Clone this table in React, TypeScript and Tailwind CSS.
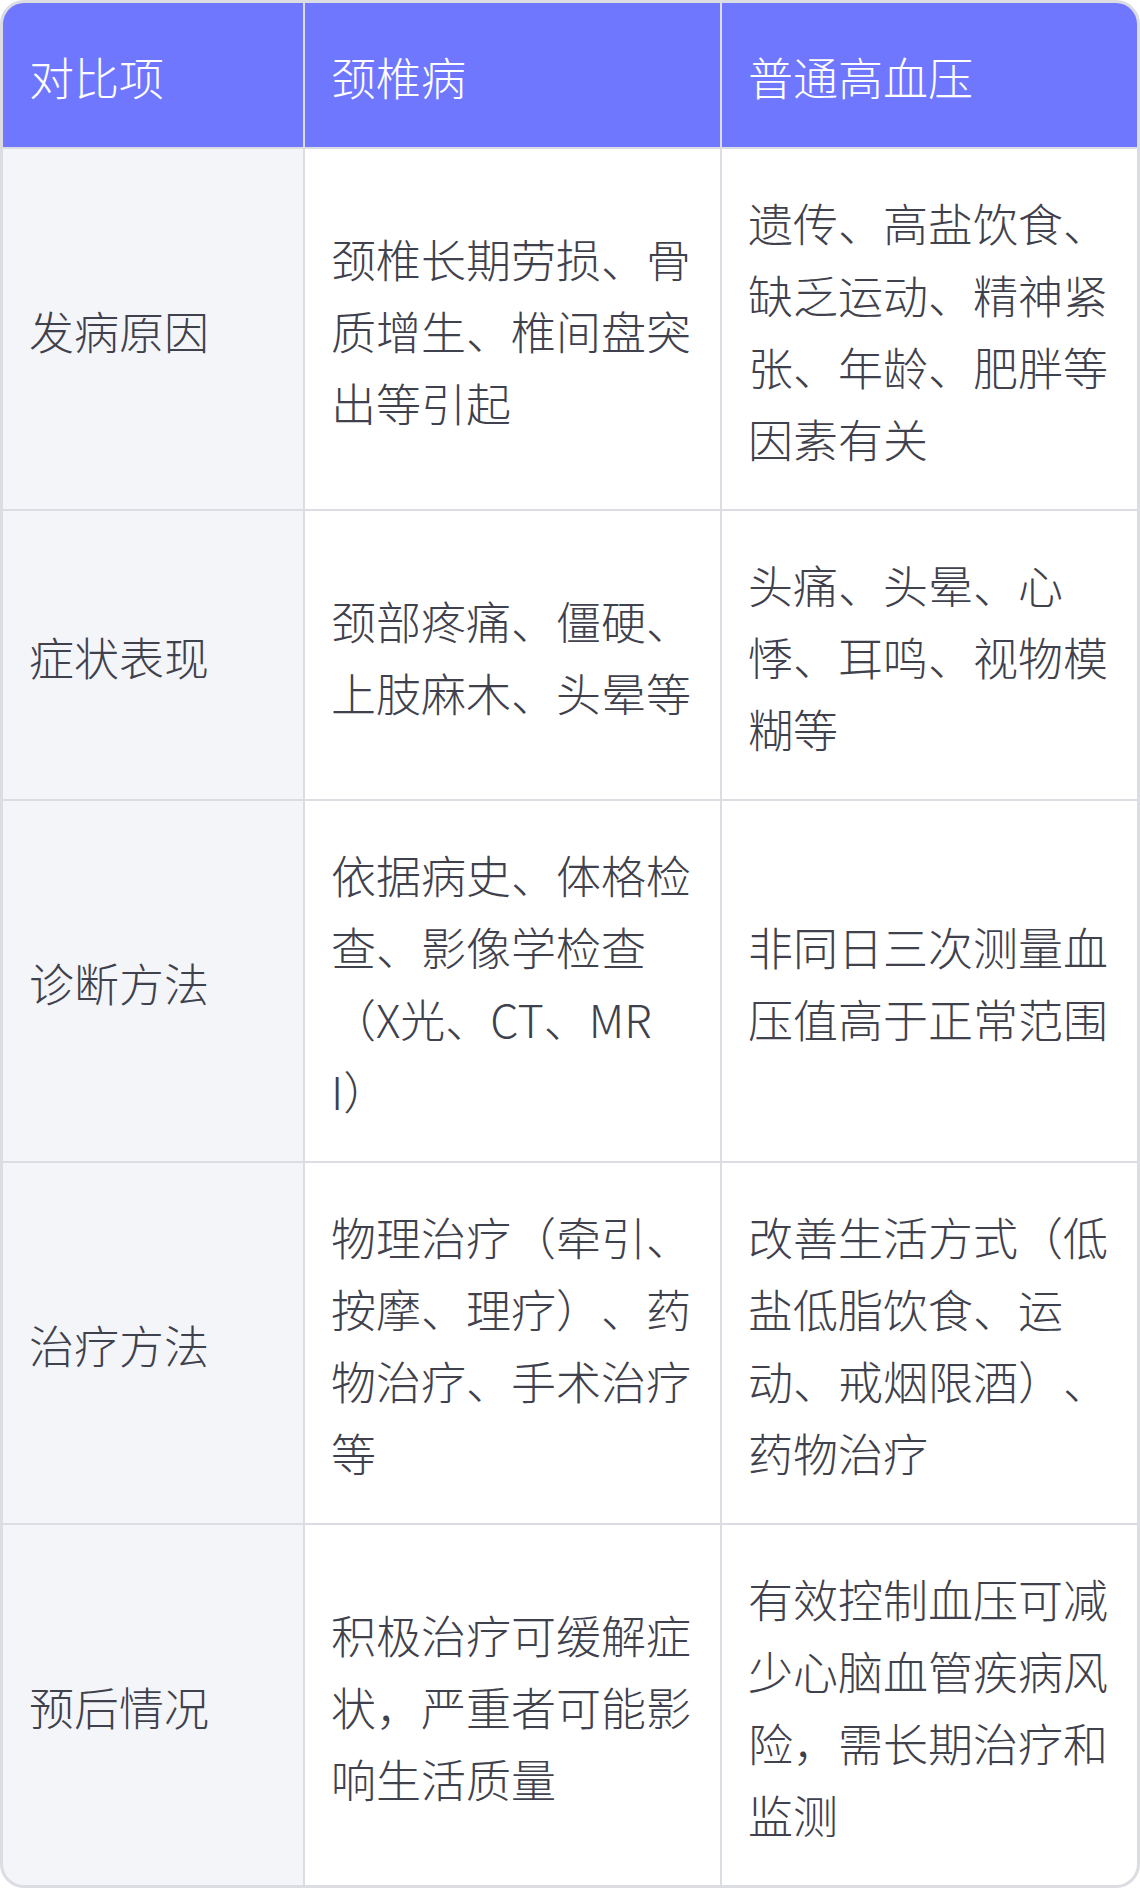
const headers = ["对比项", "颈椎病", "普通高血压"];

const rows: string[][] = [
  [
    "发病原因",
    "颈椎长期劳损、骨质增生、椎间盘突出等引起",
    "遗传、高盐饮食、缺乏运动、精神紧张、年龄、肥胖等因素有关",
  ],
  [
    "症状表现",
    "颈部疼痛、僵硬、上肢麻木、头晕等",
    "头痛、头晕、心悸、耳鸣、视物模糊等",
  ],
  [
    "诊断方法",
    "依据病史、体格检查、影像学检查（X光、CT、MRI）",
    "非同日三次测量血压值高于正常范围",
  ],
  [
    "治疗方法",
    "物理治疗（牵引、按摩、理疗）、药物治疗、手术治疗等",
    "改善生活方式（低盐低脂饮食、运动、戒烟限酒）、药物治疗",
  ],
  [
    "预后情况",
    "积极治疗可缓解症状，严重者可能影响生活质量",
    "有效控制血压可减少心脑血管疾病风险，需长期治疗和监测",
  ],
];

// per-column left padding
const pad = ["pl-[26px]", "pl-[26px]", "pl-[26px]"];

export default function App() {
  return (
    <div
      className="w-[1140px] bg-white"
      style={{ fontFamily: '"Noto Sans CJK SC", "Noto Sans", sans-serif' }}
    >
      <div className="grid grid-cols-[300px_415px_415px] gap-[2px] bg-[#dcdde2] border-[3px] border-[#dcdde2] rounded-[24px] overflow-hidden text-[45px] leading-[72px] font-light [text-spacing-trim:space-all]">
        {headers.map((h, i) => (
          <div key={h} className={"flex items-center bg-[#7077ff] text-white pr-[20px] pt-[38px] pb-[34px] " + pad[i]}>
            {h}
          </div>
        ))}
        {rows.map((row) =>
          row.map((cell, i) => (
            <div
              key={row[0] + i}
              className={
                "flex items-center pr-[20px] pt-[38px] pb-[34px] text-[#3f414c] break-all " +
                pad[i] +
                (i === 0 ? " bg-[#f4f5f9]" : " bg-white")
              }
            >
              <span>{cell}</span>
            </div>
          ))
        )}
      </div>
    </div>
  );
}
